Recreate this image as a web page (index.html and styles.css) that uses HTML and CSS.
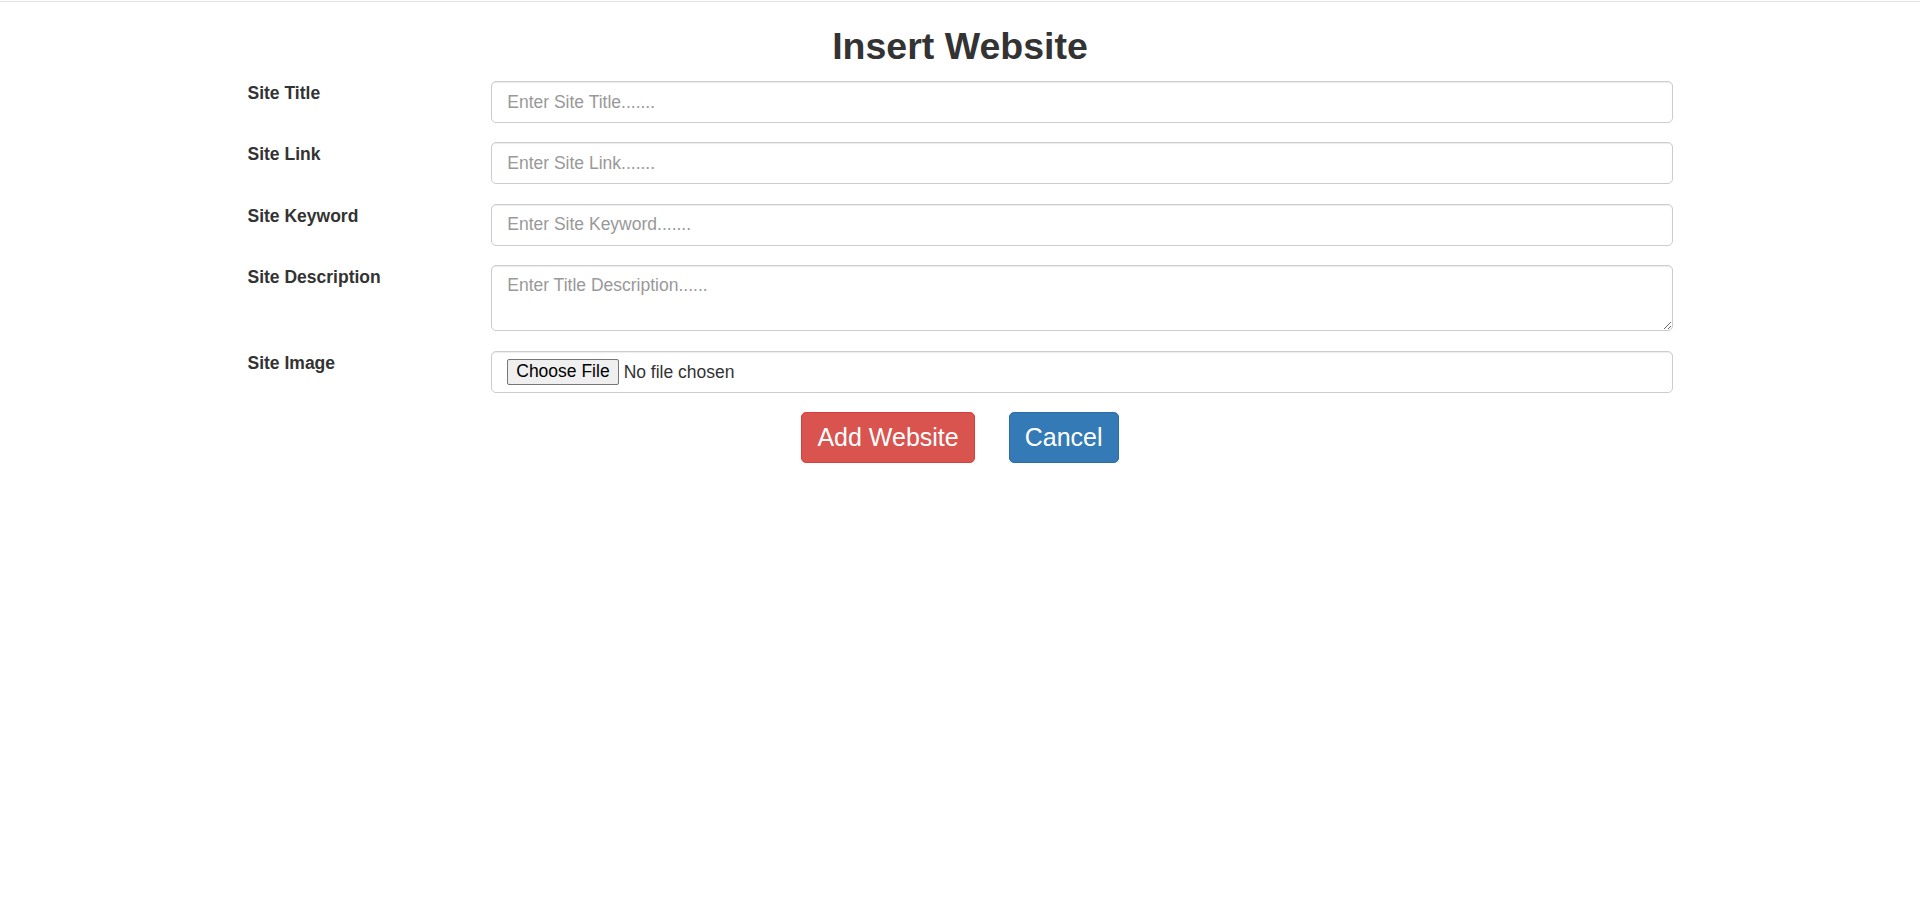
FILE: index.html
```html
<!DOCTYPE html>
<html lang="en">
<head>
<meta charset="utf-8">
<title>Insert Website</title>
<link rel="stylesheet" href="styles.css">
</head>
<body>
<div class="topline"></div>
<div class="container">
  <h1 class="title">Insert Website</h1>
  <form class="form">
    <div class="form-group">
      <label class="label" for="t">Site Title</label>
      <input class="control" id="t" type="text" placeholder="Enter Site Title.......">
    </div>
    <div class="form-group">
      <label class="label" for="l">Site Link</label>
      <input class="control" id="l" type="text" placeholder="Enter Site Link.......">
    </div>
    <div class="form-group">
      <label class="label" for="k">Site Keyword</label>
      <input class="control" id="k" type="text" placeholder="Enter Site Keyword.......">
    </div>
    <div class="form-group">
      <label class="label" for="d">Site Description</label>
      <textarea class="control area" id="d" placeholder="Enter Title Description......"></textarea>
    </div>
    <div class="form-group">
      <label class="label" for="i">Site Image</label>
      <input class="control file" id="i" type="file">
    </div>
    <div class="actions">
      <button type="button" class="btn btn-danger">Add Website</button>
      <button type="button" class="btn btn-primary">Cancel</button>
    </div>
  </form>
</div>
</body>
</html>
```
FILE: styles.css
```css
html, body {
  margin: 0;
  padding: 0;
  background: #fff;
}
body {
  font-family: "Liberation Sans", Arial, Helvetica, sans-serif;
  font-size: 17.5px;
  line-height: 25px;
  color: #333;
}
.topline {
  margin-top: 1px;
  height: 1px;
  background: #e2e2e2;
}
.container {
  width: 1425px;
  margin: 0 auto;
}
.title {
  margin: 23.5px 0 14.25px;
  font-size: 37.5px;
  line-height: 1.1;
  font-weight: 700;
  text-align: center;
  color: #333;
}
.form {
  display: flex;
  flex-direction: column;
  gap: 19.25px;
  margin: 0;
}
.form-group {
  display: grid;
  grid-template-columns: 225px 1fr;
  column-gap: 18.75px;
  align-items: start;
}
.label {
  font-weight: 700;
  font-size: 17.5px;
  line-height: 25px;
  color: #333;
}
.control {
  box-sizing: border-box;
  display: block;
  width: 100%;
  height: 42px;
  margin: 0;
  padding: 7.5px 15px;
  font-family: "Liberation Sans", Arial, Helvetica, sans-serif;
  font-size: 17.5px;
  line-height: 25px;
  color: #555;
  background: #fff;
  border: 1.25px solid #ccc;
  border-radius: 5px;
  box-shadow: inset 0 1px 1px rgba(0, 0, 0, 0.075);
  outline: none;
}
.control::placeholder {
  color: #999;
  opacity: 1;
}
.area {
  height: 66.5px;
  resize: vertical;
}
.file {
  padding: 7px 15px;
  color: #333;
}
.file::file-selector-button {
  font-family: inherit;
  font-size: 17.5px;
  line-height: 21px;
  padding: 1.5px 8px;
  margin: 0 5px 0 0;
  color: #000;
  background: #efefef;
  border: 1px solid #767676;
  border-radius: 2px;
}
.actions {
  display: flex;
  justify-content: center;
  gap: 34px;
}
.btn {
  box-sizing: border-box;
  height: 51px;
  padding: 0 15px;
  font-family: "Liberation Sans", Arial, Helvetica, sans-serif;
  font-size: 25px;
  line-height: 1;
  color: #fff;
  border: 1.25px solid transparent;
  border-radius: 5px;
  cursor: pointer;
}
.btn-danger {
  background: #d9534f;
  border-color: #d43f3a;
}
.btn-primary {
  background: #337ab7;
  border-color: #2e6da4;
}
```
